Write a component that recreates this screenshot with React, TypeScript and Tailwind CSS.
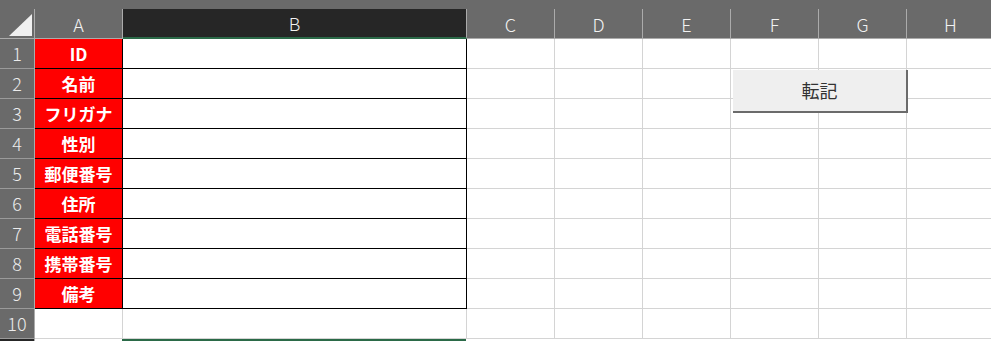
import React from 'react';

const labels = ['ID', '名前', 'フリガナ', '性別', '郵便番号', '住所', '電話番号', '携帯番号', '備考'];
const rest = ['C', 'D', 'E', 'F', 'G', 'H'];

export default function App() {
  const rows = Array.from({ length: 10 }, (_, i) => i + 1);

  return (
    <div
      className="relative w-[991px] h-[341px] overflow-hidden bg-white"
      style={{ fontFamily: '"Noto Sans CJK JP", "Noto Sans", sans-serif' }}
    >
      {/* top strip */}
      <div className="h-[9px] bg-[#6a6a6a]" />

      {/* column headers */}
      <div className="flex h-[30px] bg-[#6a6a6a] text-[18px] font-light text-[#f2f2f2] leading-none">
        <div className="w-[35px] shrink-0 border-r border-b border-[#ababab] relative">
          <div className="absolute left-[9px] top-[5px] w-0 h-0 border-l-[23px] border-l-transparent border-b-[22px] border-b-[#f0f0f0]" />
        </div>
        <div className="w-[88px] shrink-0 flex items-center justify-center border-r border-b border-[#ababab]">
          A
        </div>
        <div className="w-[344px] shrink-0 flex items-center justify-center bg-[#262626] border-r border-[#ababab] border-b-2 border-b-[#2b6a48]">
          B
        </div>
        {rest.map((c) => (
          <div
            key={c}
            className="w-[88px] shrink-0 flex items-center justify-center border-r border-b border-[#ababab]"
          >
            {c}
          </div>
        ))}
      </div>

      {/* rows */}
      {rows.map((r) => {
        const label = labels[r - 1];
        const boxed = r <= 9;
        return (
          <div key={r} className="flex h-[30px]">
            <div className="w-[35px] shrink-0 flex items-center justify-center bg-[#6a6a6a] border-r border-b border-r-[#ababab] border-b-[#9a9a9a] text-[18px] font-light text-[#ececec]">
              {r}
            </div>
            {boxed ? (
              <div className="w-[88px] shrink-0 flex items-center justify-center bg-[#ff0000] border-r border-b border-black text-[17px] font-bold text-white">
                {label}
              </div>
            ) : (
              <div className="w-[88px] shrink-0 border-r border-b border-[#d4d4d4]" />
            )}
            {boxed ? (
              <div className="w-[344px] shrink-0 border-r border-b border-black" />
            ) : (
              <div className="w-[344px] shrink-0 border-r border-b border-[#d4d4d4]" />
            )}
            {rest.map((c) => (
              <div key={c} className="w-[88px] shrink-0 border-r border-b border-[#d4d4d4]" />
            ))}
          </div>
        );
      })}

      {/* row 11 (cut off, selected) */}
      <div className="flex h-[4px]">
        <div className="w-[35px] shrink-0 bg-[#262626] border-r border-[#ababab]" />
        <div className="w-[88px] shrink-0 border-r border-[#d4d4d4]" />
        <div className="w-[344px] shrink-0 border-t-2 border-[#2b6a48] -ml-[1px]" />
      </div>

      {/* button */}
      <button className="absolute left-[733px] top-[70px] w-[175px] h-[43px] flex items-center justify-center bg-[#efefef] border-r-2 border-b-2 border-[#6b6b6b] text-[18px] text-[#333333]">
        転記
      </button>
    </div>
  );
}
